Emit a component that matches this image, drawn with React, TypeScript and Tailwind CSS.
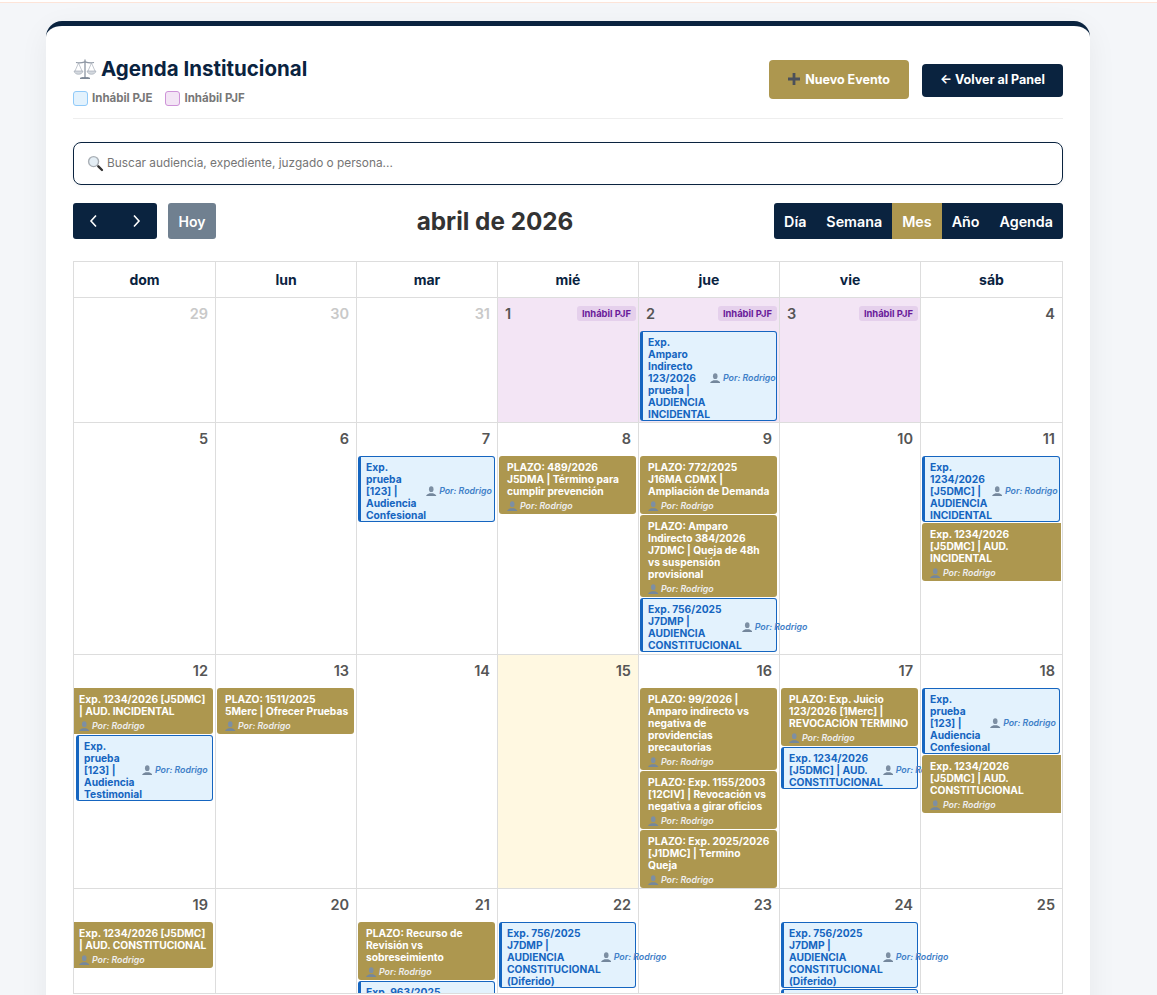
import type { ReactNode } from "react";

type Ev = {
  kind: "plazo" | "aud";
  text: string;
  bleed?: "start" | "end";
};

type Day = {
  n: number;
  muted?: boolean;
  pjf?: boolean;
  today?: boolean;
  events?: Ev[];
};

const weeks: Day[][] = [
  [
    { n: 29, muted: true },
    { n: 30, muted: true },
    { n: 31, muted: true },
    { n: 1, pjf: true },
    {
      n: 2,
      pjf: true,
      events: [{ kind: "aud", text: "Exp. Amparo Indirecto 123/2026 prueba | AUDIENCIA INCIDENTAL" }],
    },
    { n: 3, pjf: true },
    { n: 4 },
  ],
  [
    { n: 5 },
    { n: 6 },
    { n: 7, events: [{ kind: "aud", text: "Exp.\nprueba [123] | Audiencia Confesional" }] },
    { n: 8, events: [{ kind: "plazo", text: "PLAZO: 489/2026 J5DMA | Término para cumplir prevención" }] },
    {
      n: 9,
      events: [
        { kind: "plazo", text: "PLAZO: 772/2025 J16MA CDMX | Ampliación de Demanda" },
        { kind: "plazo", text: "PLAZO: Amparo Indirecto 384/2026 J7DMC | Queja de 48h vs suspensión provisional" },
        { kind: "aud", text: "Exp. 756/2025 J7DMP | AUDIENCIA CONSTITUCIONAL" },
      ],
    },
    { n: 10 },
    {
      n: 11,
      events: [
        { kind: "aud", text: "Exp. 1234/2026 [J5DMC] | AUDIENCIA INCIDENTAL" },
        { kind: "plazo", text: "Exp. 1234/2026 [J5DMC] | AUD. INCIDENTAL", bleed: "end" },
      ],
    },
  ],
  [
    {
      n: 12,
      events: [
        { kind: "plazo", text: "Exp. 1234/2026 [J5DMC] | AUD. INCIDENTAL", bleed: "start" },
        { kind: "aud", text: "Exp.\nprueba [123] | Audiencia Testimonial" },
      ],
    },
    { n: 13, events: [{ kind: "plazo", text: "PLAZO: 1511/2025 5Merc | Ofrecer Pruebas" }] },
    { n: 14 },
    { n: 15, today: true },
    {
      n: 16,
      events: [
        { kind: "plazo", text: "PLAZO: 99/2026 | Amparo indirecto vs negativa de providencias precautorias" },
        { kind: "plazo", text: "PLAZO: Exp. 1155/2003 [12CIV] | Revocación vs negativa a girar oficios" },
        { kind: "plazo", text: "PLAZO: Exp. 2025/2026 [J1DMC] | Termino Queja" },
      ],
    },
    {
      n: 17,
      events: [
        { kind: "plazo", text: "PLAZO: Exp. Juicio 123/2026 [1Merc] | REVOCACIÓN TERMINO" },
        { kind: "aud", text: "Exp. 1234/2026 [J5DMC] | AUD. CONSTITUCIONAL" },
      ],
    },
    {
      n: 18,
      events: [
        { kind: "aud", text: "Exp.\nprueba [123] | Audiencia Confesional" },
        { kind: "plazo", text: "Exp. 1234/2026 [J5DMC] | AUD. CONSTITUCIONAL", bleed: "end" },
      ],
    },
  ],
  [
    { n: 19, events: [{ kind: "plazo", text: "Exp. 1234/2026 [J5DMC] | AUD. CONSTITUCIONAL", bleed: "start" }] },
    { n: 20 },
    {
      n: 21,
      events: [
        { kind: "plazo", text: "PLAZO: Recurso de Revisión vs sobreseimiento" },
        { kind: "aud", text: "Exp. 963/2025 J7DMP | AUDIENCIA CONSTITUCIONAL" },
      ],
    },
    { n: 22, events: [{ kind: "aud", text: "Exp. 756/2025 J7DMP | AUDIENCIA CONSTITUCIONAL (Diferido)" }] },
    { n: 23 },
    {
      n: 24,
      events: [
        { kind: "aud", text: "Exp. 756/2025 J7DMP | AUDIENCIA CONSTITUCIONAL (Diferido)" },
        { kind: "aud", text: "Exp. 963/2025 J7DMP | AUDIENCIA CONSTITUCIONAL" },
      ],
    },
    { n: 25 },
  ],
];

// alto de cada semana: la ultima queda cortada por el contenedor
const weekClass = ["min-h-[125px]", "min-h-[232px]", "", "h-[105px] overflow-hidden"];

function ScalesIcon() {
  return (
    <svg viewBox="0 0 24 24" className="w-[24px] h-[24px] shrink-0" fill="none">
      <path d="M12 2.500v18" stroke="#8d96a3" strokeWidth="1.300" />
      <path d="M7 21.500c1-1.400 9-1.400 10 0z" fill="#7f8997" stroke="#7f8997" />
      <path d="M3 5.500c3 .8 6 .4 9-.6 3 1 6 1.400 9 .6" stroke="#8d96a3" strokeWidth="1.200" />
      <path d="M5.500 6 2 14M5.500 6 9 14M18.500 6 15 14M18.500 6 22 14" stroke="#a7afba" strokeWidth=".7" />
      <path d="M1 14h9c-.6 2.400-2.400 3.300-4.500 3.300S1.600 16.400 1 14z" fill="#d3d8de" stroke="#9aa3af" strokeWidth=".6" />
      <path d="M14 14h9c-.6 2.400-2.400 3.300-4.500 3.300S14.600 16.400 14 14z" fill="#d3d8de" stroke="#9aa3af" strokeWidth=".6" />
    </svg>
  );
}

function SearchIcon() {
  return (
    <svg viewBox="0 0 16 16" className="w-[17px] h-[17px] shrink-0" fill="none">
      <path d="m9.500 9.500 1.200 1.200" stroke="#8b8b8b" strokeWidth="1.400" />
      <path d="m10.700 10.700 3.400 3.400" stroke="#333" strokeWidth="2.200" strokeLinecap="round" />
      <circle cx="6.200" cy="6.200" r="4.700" fill="#e4eef5" stroke="#a9afb5" strokeWidth="1.300" />
    </svg>
  );
}

function UserIcon() {
  return (
    <svg viewBox="0 0 12 12" className="w-[10.500px] h-[10.500px] shrink-0">
      <ellipse cx="6" cy="3.600" rx="2.600" ry="3.300" fill="#7d8fa3" />
      <path d="M0 12c.2-2.400 2.600-3.200 4-3.800h4c1.400.6 3.800 1.400 4 3.800z" fill="#74879c" />
    </svg>
  );
}

function Author({ light }: { light?: boolean }) {
  return (
    <span
      className={`flex shrink-0 items-center gap-[2.500px] text-[8.800px] leading-[12px] italic font-semibold whitespace-nowrap ${
        light ? "text-[#eeeeee]" : "text-[#3f80c8]"
      }`}
    >
      <UserIcon />
      Por: Rodrigo
    </span>
  );
}

function EventCard({ ev }: { ev: Ev }) {
  if (ev.kind === "plazo") {
    const edge =
      ev.bleed === "start"
        ? "-ml-[2px] pl-[5px] rounded-l-none"
        : ev.bleed === "end"
          ? "-mr-[1px] pl-[8px] rounded-r-none"
          : "pl-[8px]";
    return (
      <div
        className={`bg-[#ad974f] text-white rounded-[3px] pr-[5.500px] pt-[4.500px] pb-[2.500px] text-[10.250px] leading-[12px] font-bold ${edge}`}
      >
        <div>{ev.text}</div>
        <div className="mt-[3px]">
          <Author light />
        </div>
      </div>
    );
  }
  return (
    <div className="flex items-center bg-[#e3f2fd] text-[#1565c0] border border-[#1565c0] border-l-[3px] rounded-[3px] pl-[5px] pt-[3.500px] pb-[.5px] text-[10.250px] leading-[12px] font-bold">
      <div className="w-min shrink-0 whitespace-pre-line">{ev.text}</div>
      <Author />
    </div>
  );
}

function DayCell({ day, first }: { day: Day; first: boolean }) {
  const bg = day.pjf ? "bg-[#f3e5f5]" : day.today ? "bg-[#fff8e1]" : "";
  return (
    <div className={`min-w-0 border-r border-[#dddddd] ${bg}`}>
      <div className={`flex h-[33px] items-start px-[7px] pt-[7px] ${day.pjf ? "justify-between" : "justify-end"}`}>
        <span
          className={`text-[14.500px] leading-[18px] font-semibold ${day.muted ? "text-[#c9c9c9]" : "text-[#555555]"}`}
        >
          {day.n}
        </span>
        {day.pjf && (
          <span className="-mr-[5px] mt-[1px] bg-[#e5d0ec] text-[#6a1b9a] rounded-[3px] px-[5px] text-[9.400px] leading-[15px] font-bold">
            Inhábil PJF
          </span>
        )}
      </div>
      <div className={`flex flex-col gap-[1px] pr-[2px] ${first ? "pl-[2px]" : "pl-[1px]"}`}>
        {day.events?.map((ev, i) => (
          <EventCard key={i} ev={ev} />
        ))}
      </div>
    </div>
  );
}

function ToolbarButton({ children, active }: { children: ReactNode; active?: boolean }) {
  return (
    <button className={`h-[36px] px-[10px] text-[14.300px] font-semibold text-white ${active ? "bg-[#ad974f]" : ""}`}>
      {children}
    </button>
  );
}

const cols = "grid grid-cols-[142px_141px_141px_141px_141px_141px_142px]";

export default function App() {
  return (
    <div className="h-[995px] overflow-hidden bg-[#f4f6f9] font-['Inter',sans-serif]">
      <div className="h-[3px] bg-[#ffffff] border-b border-[#fde4d8]" />
      <div className="ml-[46px] mt-[18px] w-[1044px] bg-white rounded-t-[16px] border-t-[5px] border-[#0a233f] shadow-[0_8px_30px_rgba(0,0,0,0.06)] px-[27px] pt-[29px] pb-[40px]">
        {/* encabezado */}
        <div className="flex items-center justify-between border-b border-[#eeeeee] pb-[12px]">
          <div>
            <h1 className="flex items-center gap-[4px] text-[20.500px] leading-[28px] font-bold text-[#0a233f]">
              <ScalesIcon />
              Agenda Institucional
            </h1>
            <div className="mt-[8px] flex items-center gap-[13px] text-[11.500px] leading-[15px] font-bold text-[#777777]">
              <span className="flex items-center gap-[4px]">
                <span className="w-[15px] h-[15px] rounded-[3px] bg-[#e3f2fd] border border-[#90caf9]" />
                Inhábil PJE
              </span>
              <span className="flex items-center gap-[4px]">
                <span className="w-[15px] h-[15px] rounded-[3px] bg-[#f3e5f5] border border-[#ce93d8]" />
                Inhábil PJF
              </span>
            </div>
          </div>
          <div className="flex items-center gap-[13px] mb-[3px]">
            <button className="flex h-[39px] w-[140px] items-center justify-center gap-[5px] rounded-[4px] bg-[#ad974f] text-[12.500px] font-bold text-white">
              <svg viewBox="0 0 13 13" className="w-[12px] h-[12px]" fill="#4b505a">
                <path d="M5 0h3v5h5v3H8v5H5V8H0V5h5z" />
              </svg>
              <span className="pt-[3px]">Nuevo Evento</span>
            </button>
            <button className="mt-[2px] h-[33px] w-[141px] rounded-[4px] bg-[#0a233f] pt-[1px] text-[12.500px] font-bold text-white">
              ← Volver al Panel
            </button>
          </div>
        </div>

        {/* buscador */}
        <div className="mt-[23px] flex h-[43px] items-center gap-[3px] rounded-[8px] border border-[#0a233f] px-[13px] text-[11.850px] text-[#757575] shadow-[0_1px_4px_rgba(0,0,0,0.05)]">
          <SearchIcon />
          Buscar audiencia, expediente, juzgado o persona...
        </div>

        {/* toolbar */}
        <div className="mt-[18px] flex items-center justify-between">
          <div className="flex items-center gap-[11px]">
            <div className="flex h-[36px] w-[84px] items-center justify-around rounded-[3px] bg-[#0a233f] text-white">
              <svg viewBox="0 0 16 16" className="w-[16px] h-[16px]" fill="none" stroke="currentColor" strokeWidth="1.600">
                <path d="M10 2.500 5 8l5 5.500" />
              </svg>
              <svg viewBox="0 0 16 16" className="w-[16px] h-[16px]" fill="none" stroke="currentColor" strokeWidth="1.600">
                <path d="m6 2.500 5 5.500-5 5.500" />
              </svg>
            </div>
            <button className="h-[36px] w-[48px] rounded-[3px] bg-[#708090] text-[14px] font-semibold text-white">
              Hoy
            </button>
          </div>
          <h2 className="text-[24.300px] font-bold text-[#333333]">abril de 2026</h2>
          <div className="flex h-[36px] overflow-hidden rounded-[3px] bg-[#0a233f]">
            <ToolbarButton>Día</ToolbarButton>
            <ToolbarButton>Semana</ToolbarButton>
            <ToolbarButton active>Mes</ToolbarButton>
            <ToolbarButton>Año</ToolbarButton>
            <ToolbarButton>Agenda</ToolbarButton>
          </div>
        </div>

        {/* calendario */}
        <div className="mt-[22px] border-t border-l border-[#dddddd]">
          <div className={`${cols} border-b border-[#dddddd]`}>
            {["dom", "lun", "mar", "mié", "jue", "vie", "sáb"].map((d) => (
              <div
                key={d}
                className="h-[35px] border-r border-[#dddddd] flex items-center justify-center text-[14px] font-bold text-[#0a233f]"
              >
                {d}
              </div>
            ))}
          </div>
          {weeks.map((w, i) => (
            <div key={i} className={`${cols} border-b border-[#dddddd] ${weekClass[i]}`}>
              {w.map((d, j) => (
                <DayCell key={d.n} day={d} first={j === 0} />
              ))}
            </div>
          ))}
        </div>
      </div>
    </div>
  );
}
